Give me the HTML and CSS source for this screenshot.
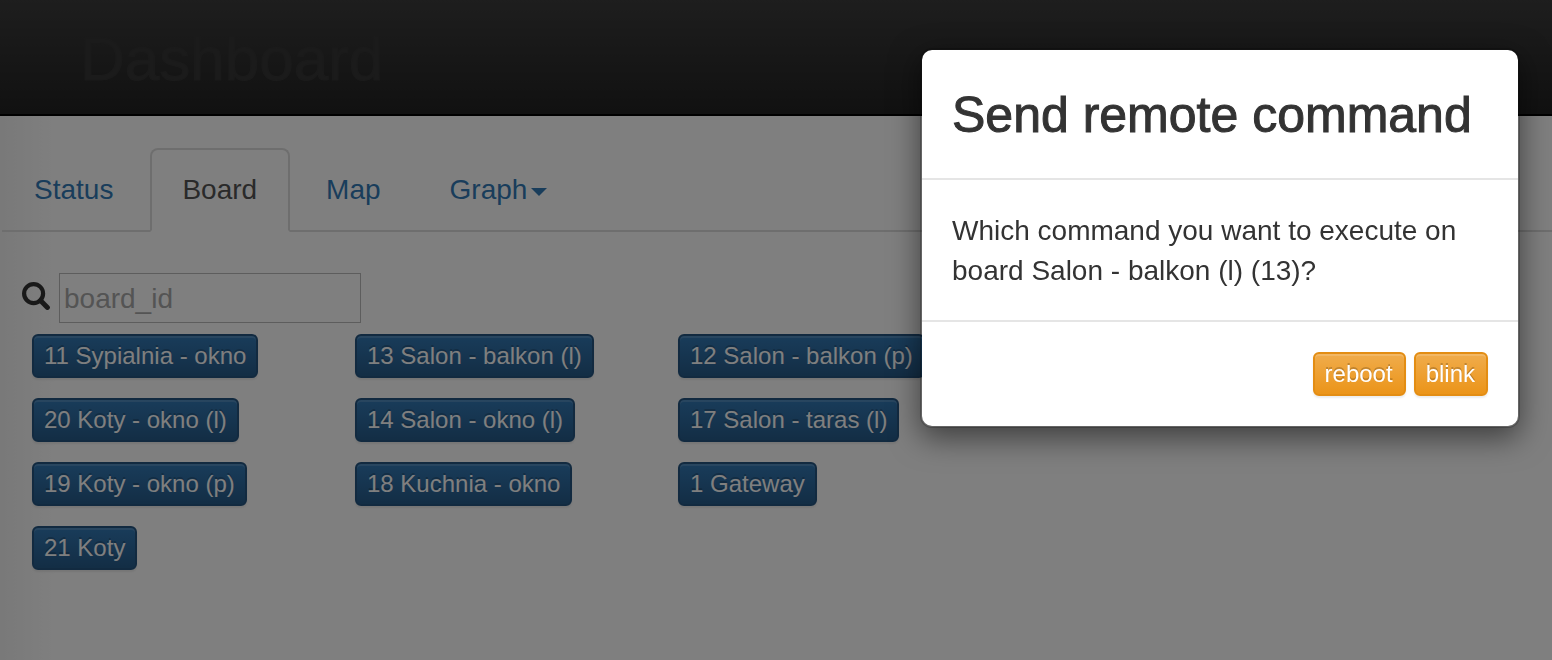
FILE: index.html
```html
<!DOCTYPE html>
<html lang="en">
<head>
<meta charset="utf-8">
<title>Dashboard</title>
<link rel="stylesheet" href="styles.css">
</head>
<body>
<header class="navbar"><span class="brand">Dashboard</span></header>
<main class="page">
  <nav class="tabs">
    <a class="tab" href="#status">Status</a>
    <a class="tab active" href="#board" aria-current="page">Board</a>
    <a class="tab" href="#map">Map</a>
    <a class="tab" href="#graph">Graph<span class="caret"></span></a>
  </nav>
  <div class="search">
    <label class="search-label" for="board-id" aria-label="Board id">
      <svg class="search-icon" viewBox="0 0 28 28" aria-hidden="true">
        <circle cx="11.6" cy="11.6" r="9.5" fill="none" stroke="currentColor" stroke-width="4.2"/>
        <path d="M18.5 18.5L25.4 25.4" stroke="currentColor" stroke-width="5" stroke-linecap="round"/>
      </svg>
    </label>
    <input class="search-input" id="board-id" type="text" placeholder="board_id">
  </div>
  <div class="boards">
    <button class="btn primary" type="button">11 Sypialnia - okno</button>
    <button class="btn primary" type="button">13 Salon - balkon (l)</button>
    <button class="btn primary" type="button">12 Salon - balkon (p)</button>
    <button class="btn primary" type="button">20 Koty - okno (l)</button>
    <button class="btn primary" type="button">14 Salon - okno (l)</button>
    <button class="btn primary" type="button">17 Salon - taras (l)</button>
    <button class="btn primary" type="button">19 Koty - okno (p)</button>
    <button class="btn primary" type="button">18 Kuchnia - okno</button>
    <button class="btn primary" type="button">1 Gateway</button>
    <button class="btn primary" type="button">21 Koty</button>
  </div>
</main>
<div class="backdrop"></div>
<div class="modal" role="dialog" aria-modal="true" aria-labelledby="modal-title">
  <div class="modal-header"><h1 class="modal-title" id="modal-title">Send remote command</h1></div>
  <div class="modal-body">Which command you want to execute on board Salon - balkon (l) (13)?</div>
  <div class="modal-footer">
    <button class="btn warning" type="button">reboot</button>
    <button class="btn warning" type="button">blink</button>
  </div>
</div>
</body>
</html>
```

FILE: styles.css
```css
* {
  box-sizing: border-box;
}

body {
  margin: 0;
  min-height: 100vh;
  display: flex;
  flex-direction: column;
  font: 28px/40px "Liberation Sans", Arial, sans-serif;
  color: #333;
  background: #fff;
}

.navbar {
  padding: 14px 80px 10px;
  background: linear-gradient(#3c3c3c, #222);
  border-bottom: 2px solid #000;
}

.brand {
  display: block;
  font-size: 62px;
  line-height: 90px;
  color: #363636;
  -webkit-text-stroke: 1px;
}

.page {
  flex: 1;
  padding-top: 32px;
  background: linear-gradient(to right, #f2f2f2, #fff 56px);
}

.tabs {
  display: flex;
  gap: 4px;
  margin-left: 2px;
  border-bottom: 2px solid #ddd;
}

.tab {
  padding: 20px 31px 20px 30px;
  margin-bottom: -2px;
  border: 2px solid transparent;
  border-radius: 8px 8px 0 0;
  color: #337ab7;
  text-decoration: none;
}

.tab.active {
  color: #555;
  background: #fff;
  border-color: #ddd #ddd #fff;
}

.caret {
  display: inline-block;
  margin-left: 4px;
  vertical-align: middle;
  border-top: 8px solid;
  border-right: 8px solid transparent;
  border-left: 8px solid transparent;
}

.search {
  display: flex;
  align-items: center;
  gap: 9px;
  padding: 41px 22px 0;
}

.search-label {
  display: flex;
  padding-bottom: 4px;
  color: #333;
}

.search-icon {
  width: 28px;
  height: 28px;
}

.search-input {
  width: 302px;
  height: 50px;
  padding: 2px 4px 0;
  border: 1px solid #bbb;
  background: transparent;
  font: inherit;
  color: #333;
}

.search-input::placeholder {
  color: #a9a9a9;
  opacity: 1;
}

.boards {
  display: grid;
  grid-template-columns: repeat(3, 323px);
  justify-items: start;
  gap: 20px 0;
  padding: 11px 32px;
}

.btn {
  padding: 2px 10px;
  border: 2px solid;
  border-radius: 6px;
  font: 24px/36px "Liberation Sans", Arial, sans-serif;
  color: #fff;
  white-space: nowrap;
  text-shadow: 0 -2px 0 rgba(0, 0, 0, 0.2);
  box-shadow: inset 0 2px 0 rgba(255, 255, 255, 0.15), 0 2px 2px rgba(0, 0, 0, 0.075);
}

.primary {
  background: linear-gradient(#337ab7, #265a88) border-box;
  border-color: #245580;
}

.warning {
  padding: 2px 11px 2px 10px;
  background: linear-gradient(#f0ad4e, #eb9316) border-box;
  border-color: #e38d13;
}

.backdrop {
  position: fixed;
  inset: 0;
  background: rgba(0, 0, 0, 0.5);
}

.modal {
  position: absolute;
  top: 48px;
  right: 32px;
  width: 600px;
  max-width: calc(100% - 64px);
  background: #fff;
  background-clip: padding-box;
  border: 2px solid rgba(0, 0, 0, 0.2);
  border-radius: 12px;
  box-shadow: 0 10px 30px rgba(0, 0, 0, 0.5);
}

.modal-header {
  padding: 31px 30px 29px;
  border-bottom: 2px solid #e5e5e5;
}

.modal-title {
  margin: 0;
  font-size: 50px;
  line-height: 68px;
  font-weight: 500;
  white-space: nowrap;
  -webkit-text-stroke: 1px #333;
}

.modal-body {
  padding: 31px 30px 29px;
}

.modal-footer {
  display: flex;
  justify-content: flex-end;
  gap: 8px;
  padding: 30px;
  border-top: 2px solid #e5e5e5;
}
```
